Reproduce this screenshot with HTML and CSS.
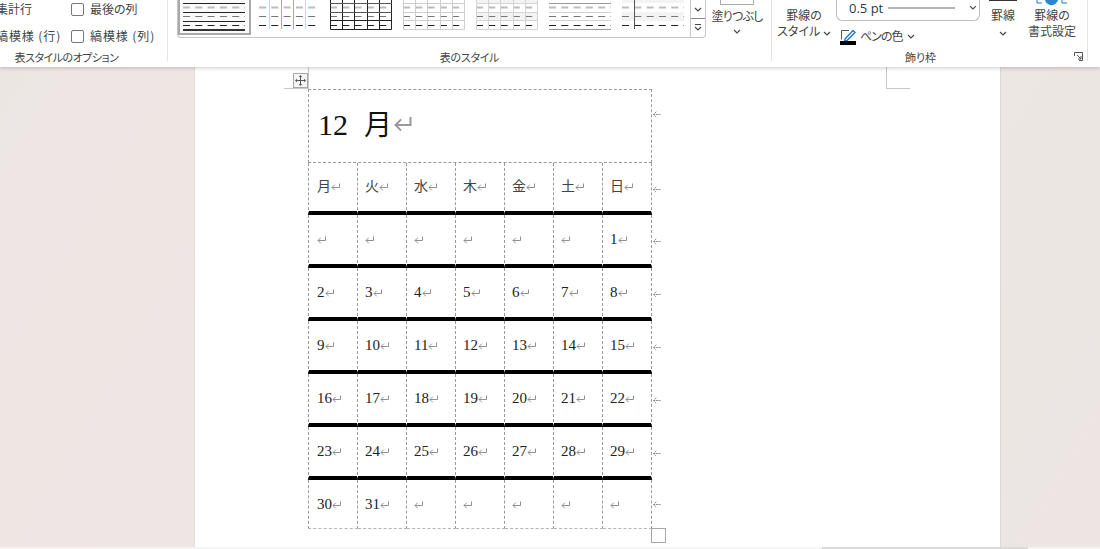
FILE: index.html
```html
<!DOCTYPE html>
<html lang="ja">
<head>
<meta charset="utf-8">
<title>表のデザイン</title>
<link rel="stylesheet" href="styles.css">
</head>
<body>
<svg class="defs" width="0" height="0" aria-hidden="true">
  <symbol id="ret" viewBox="0 0 9 8"><path d="M8.5 0.5V4.5H1M3.8 1.7L1 4.5L3.8 7.3" fill="none" stroke="currentColor" stroke-width="1"/></symbol>
  <symbol id="ret-end" viewBox="0 0 9 8"><path d="M8.5 4.5H1.5M4.3 1.7L1.5 4.5L4.3 7.3" fill="none" stroke="currentColor" stroke-width="1" stroke-dasharray="2 .6"/></symbol>
  <symbol id="chev" viewBox="0 0 8 5"><path d="M1 1L4 4L7 1" fill="none" stroke="currentColor" stroke-width="1.1"/></symbol>
  <g id="dashes">
    <path d="M0 7.5H62" stroke="#bcbcbc" stroke-width="2" stroke-dasharray="7 5.3"/>
    <path d="M0 16.5H62" stroke="#777" stroke-width="1" stroke-dasharray="7 5.3"/>
    <path d="M0 25.5H62" stroke="#222" stroke-width="1" stroke-dasharray="7 5.3"/>
  </g>
</svg>

<header class="ribbon">
  <section class="group group-options">
    <div class="options">
      <span class="opt-text">集計行</span>
      <span class="check"></span><span class="opt-text">最後の列</span>
      <span class="opt-text wide">縞模様 (行)</span>
      <span class="check"></span><span class="opt-text wide">縞模様 (列)</span>
    </div>
    <div class="group-label label-options">表スタイルのオプション</div>
  </section>

  <section class="group group-styles">
    <div class="styles-row">
      <div class="gallery">
        <div class="thumbs">
          <svg class="thumb selected" width="69" height="33" viewBox="-3 0 69 33">
            <use href="#dashes"/>
            <path d="M0 3.5H62M0 12.5H62M0 21.5H62" stroke="#222" fill="none"/>
            <path d="M0 30H62" stroke="#333" stroke-width="2"/>
          </svg>
          <svg class="thumb" width="60" height="30" viewBox="0 0 60 30">
            <use href="#dashes"/>
            <path d="M10.5 0V29M46.5 0V29" stroke="#b5dcef"/>
            <path d="M22.5 0V29M34.5 0V29" stroke="#6fb9de"/>
          </svg>
          <svg class="thumb" width="62" height="30" viewBox="0 0 62 30">
            <use href="#dashes"/>
            <path d="M0.5 0V29.5H61.5V0M12.5 0V29M24.5 0V29M37.5 0V29M49.5 0V29M0 20.5H62" stroke="#222" fill="none"/>
            <path d="M0 3.5H62M0 12.5H62" stroke="#555"/>
          </svg>
          <svg class="thumb" width="62" height="30" viewBox="0 0 62 30">
            <use href="#dashes"/>
            <path d="M0.5 0V29.5H61.5V0M12.5 0V29M24.5 0V29M37.5 0V29M49.5 0V29M0 3.5H62M0 12.5H62M0 20.5H62" stroke="#cfcfcf" fill="none"/>
          </svg>
          <svg class="thumb" width="62" height="30" viewBox="0 0 62 30">
            <path d="M0 0H62V3H0ZM0 12H62V21H0Z" fill="#f3f3f3"/>
            <use href="#dashes"/>
            <path d="M0.5 0V29.5H61.5V0M12.5 0V29M24.5 0V29M37.5 0V29M49.5 0V29M0 3.5H62M0 12.5H62M0 20.5H62" stroke="#d4d4d4" fill="none"/>
          </svg>
          <svg class="thumb" width="62" height="30" viewBox="0 0 62 30">
            <use href="#dashes"/>
            <path d="M0 3.5H62M0 29.5H62" stroke="#9a9a9a"/>
            <path d="M0 12.5H62M0 20.5H62" stroke="#d0d0d0"/>
          </svg>
          <svg class="thumb" width="62" height="30" viewBox="0 0 62 30">
            <path d="M0 0H62V3H0ZM0 12H62V21H0Z" fill="#f3f3f3"/>
            <use href="#dashes"/>
            <path d="M12.5 0V29" stroke="#555"/>
          </svg>
        </div>
        <div class="gallery-scroll">
          <span class="scroll-btn"><svg class="chev"><use href="#chev"/></svg></span>
          <span class="scroll-btn more"><svg class="chev"><use href="#chev"/></svg></span>
        </div>
      </div>
      <div class="fill">
        <span class="fill-swatch"></span>
        <span class="fill-text">塗りつぶし</span>
        <svg class="chev"><use href="#chev"/></svg>
      </div>
    </div>
    <div class="group-label label-styles">表のスタイル</div>
  </section>

  <section class="group group-borders">
    <div class="borders-row">
      <div class="stack border-style">
        <span>罫線の</span>
        <span>スタイル <svg class="chev"><use href="#chev"/></svg></span>
      </div>
      <div class="pen">
        <div class="weight">
          <span class="weight-value">0.5 pt</span>
          <span class="weight-line"></span>
          <svg class="chev"><use href="#chev"/></svg>
        </div>
        <div class="pen-color">
          <svg class="pen-icon" width="17" height="17" viewBox="0 0 17 17">
            <path d="M1.5 11.5V2.5H9" fill="none" stroke="#555"/>
            <path d="M5 11L13 2.5L15 4.5L7 12.5L4.5 13Z" fill="#fff" stroke="#1f78c8" stroke-width="1.4"/>
            <rect x="0" y="13" width="16" height="4" fill="#000"/>
          </svg>
          <span class="pen-text">ペンの色</span>
          <svg class="chev"><use href="#chev"/></svg>
        </div>
      </div>
      <div class="stack borders-btn">
        <span class="borders-icon"></span>
        <span>罫線</span>
        <svg class="chev"><use href="#chev"/></svg>
      </div>
      <div class="stack painter">
        <svg class="painter-icon" width="36" height="6" viewBox="0 0 36 6">
          <path d="M3 0V3H8M28 0V3H33" fill="none" stroke="#1f78c8"/>
          <path d="M11 0H24Q22 6 16 5Q12 4 11 0Z" fill="#2b86d0"/>
        </svg>
        <span>罫線の</span>
        <span>書式設定</span>
      </div>
    </div>
    <div class="group-label label-borders">飾り枠</div>
    <svg class="launcher" width="9" height="9" viewBox="0 0 9 9"><path d="M0.5 4V0.5H8.5V8.5H5M3 3L7 7M7 4V7H4" fill="none" stroke="#555"/></svg>
  </section>
</header>

<main class="workspace">
  <div class="page">
    <span class="crop crop-left"></span>
    <span class="crop crop-right"></span>
    <span class="move-handle">
      <svg width="11" height="11" viewBox="0 0 11 11"><path d="M5.5 0L7.2 2H3.8ZM5.5 11L3.8 9H7.2ZM0 5.5L2 3.8V7.2ZM11 5.5L9 7.2V3.8ZM5 2H6V9H5ZM2 5H9V6H2Z" fill="#555"/></svg>
    </span>
    <div class="table-wrap">
      <table class="calendar">
        <colgroup>
          <col class="col-first"><col class="col-day"><col class="col-day"><col class="col-day"><col class="col-day"><col class="col-day"><col class="col-day"><col class="col-end">
        </colgroup>
        <tr class="title-row">
          <td colspan="7" class="title first">12<span class="month">月</span><svg class="ret-big"><use href="#ret"/></svg></td>
          <td class="end"><svg class="ret"><use href="#ret-end"/></svg></td>
        </tr>
        <tr class="head-row week">
          <td class="first">月<svg class="ret"><use href="#ret"/></svg></td>
          <td>火<svg class="ret"><use href="#ret"/></svg></td>
          <td>水<svg class="ret"><use href="#ret"/></svg></td>
          <td>木<svg class="ret"><use href="#ret"/></svg></td>
          <td>金<svg class="ret"><use href="#ret"/></svg></td>
          <td>土<svg class="ret"><use href="#ret"/></svg></td>
          <td>日<svg class="ret"><use href="#ret"/></svg></td>
          <td class="end"><svg class="ret"><use href="#ret-end"/></svg></td>
        </tr>
        <tr class="week">
          <td class="first"><svg class="ret"><use href="#ret"/></svg></td>
          <td><svg class="ret"><use href="#ret"/></svg></td>
          <td><svg class="ret"><use href="#ret"/></svg></td>
          <td><svg class="ret"><use href="#ret"/></svg></td>
          <td><svg class="ret"><use href="#ret"/></svg></td>
          <td><svg class="ret"><use href="#ret"/></svg></td>
          <td>1<svg class="ret"><use href="#ret"/></svg></td>
          <td class="end"><svg class="ret"><use href="#ret-end"/></svg></td>
        </tr>
        <tr class="week">
          <td class="first">2<svg class="ret"><use href="#ret"/></svg></td>
          <td>3<svg class="ret"><use href="#ret"/></svg></td>
          <td>4<svg class="ret"><use href="#ret"/></svg></td>
          <td>5<svg class="ret"><use href="#ret"/></svg></td>
          <td>6<svg class="ret"><use href="#ret"/></svg></td>
          <td>7<svg class="ret"><use href="#ret"/></svg></td>
          <td>8<svg class="ret"><use href="#ret"/></svg></td>
          <td class="end"><svg class="ret"><use href="#ret-end"/></svg></td>
        </tr>
        <tr class="week">
          <td class="first">9<svg class="ret"><use href="#ret"/></svg></td>
          <td>10<svg class="ret"><use href="#ret"/></svg></td>
          <td>11<svg class="ret"><use href="#ret"/></svg></td>
          <td>12<svg class="ret"><use href="#ret"/></svg></td>
          <td>13<svg class="ret"><use href="#ret"/></svg></td>
          <td>14<svg class="ret"><use href="#ret"/></svg></td>
          <td>15<svg class="ret"><use href="#ret"/></svg></td>
          <td class="end"><svg class="ret"><use href="#ret-end"/></svg></td>
        </tr>
        <tr class="week">
          <td class="first">16<svg class="ret"><use href="#ret"/></svg></td>
          <td>17<svg class="ret"><use href="#ret"/></svg></td>
          <td>18<svg class="ret"><use href="#ret"/></svg></td>
          <td>19<svg class="ret"><use href="#ret"/></svg></td>
          <td>20<svg class="ret"><use href="#ret"/></svg></td>
          <td>21<svg class="ret"><use href="#ret"/></svg></td>
          <td>22<svg class="ret"><use href="#ret"/></svg></td>
          <td class="end"><svg class="ret"><use href="#ret-end"/></svg></td>
        </tr>
        <tr class="week">
          <td class="first">23<svg class="ret"><use href="#ret"/></svg></td>
          <td>24<svg class="ret"><use href="#ret"/></svg></td>
          <td>25<svg class="ret"><use href="#ret"/></svg></td>
          <td>26<svg class="ret"><use href="#ret"/></svg></td>
          <td>27<svg class="ret"><use href="#ret"/></svg></td>
          <td>28<svg class="ret"><use href="#ret"/></svg></td>
          <td>29<svg class="ret"><use href="#ret"/></svg></td>
          <td class="end"><svg class="ret"><use href="#ret-end"/></svg></td>
        </tr>
        <tr class="last-row">
          <td class="first">30<svg class="ret"><use href="#ret"/></svg></td>
          <td>31<svg class="ret"><use href="#ret"/></svg></td>
          <td><svg class="ret"><use href="#ret"/></svg></td>
          <td><svg class="ret"><use href="#ret"/></svg></td>
          <td><svg class="ret"><use href="#ret"/></svg></td>
          <td><svg class="ret"><use href="#ret"/></svg></td>
          <td><svg class="ret"><use href="#ret"/></svg></td>
          <td class="end"><svg class="ret"><use href="#ret-end"/></svg></td>
        </tr>
      </table>
      <span class="resize-handle"></span>
    </div>
  </div>
  <div class="h-scroll"><span class="h-thumb"></span></div>
</main>
</body>
</html>
```
FILE: styles.css
```css
* { box-sizing: border-box; }
html, body { height: 100%; }
body {
  margin: 0;
  overflow: hidden;
  display: flex;
  flex-direction: column;
  font-family: "Noto Sans CJK JP", "Liberation Sans", sans-serif;
  font-size: 12px;
  color: #444;
  background: #ede7e4;
}
.defs { position: absolute; }

/* ribbon */
.ribbon {
  flex: 0 0 67px;
  height: 67px;
  display: flex;
  background: #fff;
  box-shadow: 0 1px 4px rgba(0, 0, 0, .22);
  position: relative;
  z-index: 2;
  overflow: hidden;
  font-feature-settings: "palt";
}
.group {
  position: relative;
  display: flex;
  flex-direction: column;
  justify-content: space-between;
  height: 61px;
  border-right: 1px solid #e3e3e3;
}
.group-options { flex: 0 0 168px; }
.group-styles { flex: 0 0 604px; }
.group-borders { flex: 0 0 316px; }
.group-label {
  height: 16px;
  margin-bottom: -4px;
  font-size: 11px;
  line-height: 16px;
  text-align: center;
  white-space: nowrap;
}
.label-options { padding-right: 34px; letter-spacing: -.5px; }
.label-styles { letter-spacing: -.3px; }
.label-borders { padding-right: 18px; }

.options {
  display: grid;
  grid-template-columns: 75px 19px auto;
  grid-template-rows: 18px 18px;
  row-gap: 9px;
  align-items: center;
  margin-left: -4px;
}
.options > .opt-text:nth-child(1),
.options > .opt-text:nth-child(4) { grid-column: 1; }
.opt-text { white-space: nowrap; line-height: 18px; }
.opt-text.wide { letter-spacing: .9px; }
.check {
  width: 13px;
  height: 13px;
  border: 1px solid #777;
  border-radius: 2px;
}

.styles-row { display: flex; align-items: flex-start; padding-left: 9px; }
.gallery {
  flex: 0 0 529px;
  height: 38px;
  display: flex;
  justify-content: space-between;
  border: 1px solid #c6c6c6;
  border-top: 0;
  border-radius: 0 0 4px 4px;
}
.thumbs { display: flex; align-items: flex-start; gap: 11px; }
.thumb { display: block; flex: none; }
.thumb.selected {
  box-sizing: content-box;
  border: 2px solid #a9a9a9;
  border-top: 0;
  background: #fafafa;
  margin-right: -3px;
}
.gallery-scroll {
  flex: 0 0 15px;
  display: flex;
  flex-direction: column;
  border-left: 1px solid #c6c6c6;
}
.scroll-btn { flex: 1; display: flex; align-items: center; justify-content: center; color: #444; }
.scroll-btn.more { border-top: 1px solid #888; position: relative; }
.scroll-btn.more::before {
  content: "";
  position: absolute;
  left: 4px;
  right: 4px;
  top: 5px;
  border-top: 1px solid #444;
}
.chev { width: 8px; height: 5px; color: #444; display: inline-block; }
.fill {
  width: 62px;
  display: flex;
  flex-direction: column;
  align-items: center;
  line-height: 18px;
  white-space: nowrap;
}
.fill-swatch {
  width: 34px;
  height: 5px;
  border: 1px solid #aaa;
  border-top: 0;
  margin-bottom: 2px;
}
.fill-text { letter-spacing: -.8px; }
.fill .chev { margin-top: 4px; }

.borders-row { display: flex; align-items: flex-start; }
.stack {
  display: flex;
  flex-direction: column;
  align-items: center;
  line-height: 16px;
  white-space: nowrap;
}
.border-style { width: 64px; padding-top: 7px; }
.pen { width: 144px; }
.weight {
  height: 21px;
  display: flex;
  align-items: center;
  padding: 0 2px 5px 12px;
  border: 1px solid #bdbdbd;
  border-top: 0;
  border-radius: 0 0 6px 6px;
}
.weight-value {
  width: 40px;
  font-family: "Open Sans", "Liberation Sans", sans-serif;
  font-size: 13px;
  color: #1f3a57;
}
.weight-line { width: 68px; border-top: 2px solid #b4b4b4; margin-right: 14px; }
.pen-color {
  margin-top: 6px;
  display: flex;
  align-items: center;
  gap: 3px;
  padding-left: 4px;
  line-height: 16px;
}
.pen-text { letter-spacing: -1px; }
.pen-color .chev { margin-left: 2px; }
.pen-icon { margin-top: 1px; }
.borders-btn { margin-left: 8px; width: 30px; }
.borders-icon { width: 28px; height: 2px; border-top: 1px solid #333; margin-bottom: 5px; }
.borders-btn .chev { margin-top: 8px; }
.painter { width: 68px; }
.painter-icon { margin-bottom: 1px; }
.launcher { position: absolute; right: 4px; bottom: 0; }

/* document */
.workspace {
  flex: 1;
  min-height: 0;
  display: flex;
  flex-direction: column;
  background: linear-gradient(120deg, #ece6e3, #efe6e4 14%, #ece6e3 88%, #ede5e3);
}
.page {
  position: relative;
  flex: 1;
  margin-left: 194px;
  width: 807px;
  background: #fff;
  border-left: 1px solid #e2dedc;
  border-right: 1px solid #dcd8d6;
  padding: 22px 0 0 113px;
}
.h-scroll { flex: 0 0 2px; background: #f4f4f4; }
.h-thumb { display: block; height: 2px; width: 1028px; background: linear-gradient(90deg, #f4f4f4 80%, #d9d9d9 80%); }

.crop { position: absolute; border: 0 solid #c8c8c8; }
.crop-left { left: 89px; top: 0; width: 25px; height: 22px; border-bottom-width: 1px; border-right-width: 1px; }
.crop-right { left: 691px; top: 0; width: 24px; height: 22px; border-bottom-width: 1px; border-left-width: 1px; }
.move-handle {
  position: absolute;
  left: 98px;
  top: 6px;
  width: 15px;
  height: 15px;
  display: flex;
  align-items: center;
  justify-content: center;
  border: 1px solid #a8a8a8;
  background: #f4f4f4;
}

.table-wrap { position: relative; width: 356px; }
.calendar {
  table-layout: fixed;
  border-collapse: separate;
  border-spacing: 0;
  width: 356px;
  font-family: "Liberation Serif", "Noto Sans CJK JP", serif;
  font-size: 15px;
  color: #222;
}
.col-first { width: 50px; }
.col-day { width: 49px; }
.col-end { width: 12px; }
.calendar td {
  height: 53px;
  padding: 0 0 0 7px;
  vertical-align: middle;
  white-space: nowrap;
  border-right: 1px dashed #9a9a9a;
}
.calendar td.first { border-left: 1px dashed #9a9a9a; padding-left: 8px; }
.calendar td.end { border: 0; padding: 0 0 2px; color: #a0a0a0; }
.calendar .week td:not(.end) { border-bottom: 4px solid #000; }
.calendar .head-row td { height: 52px; }
.calendar .head-row td:not(.end) { padding-bottom: 4px; font-size: 14px; color: #444; }
.calendar .last-row td { height: 49px; }
.calendar .last-row td:not(.end) { border-bottom: 1px dashed #b5b5b5; }
.calendar .title-row td { height: 74px; }
.calendar .title-row td.end { padding-bottom: 25px; }
.calendar .title-row td:not(.end) {
  border-top: 1px dashed #9a9a9a;
  border-bottom: 1px dashed #9a9a9a;
}
.calendar td.title { font-size: 30px; padding: 0 0 3px 9px; color: #111; line-height: 1; }
.month { margin-left: 16px; font-size: 28px; }
.ret { width: 9px; height: 8px; color: #909090; vertical-align: 0; }
.ret-big { width: 19px; height: 16px; margin-left: 1px; color: #9a9a9a; vertical-align: 3px; }
.resize-handle {
  position: absolute;
  left: 343px;
  top: 439px;
  width: 15px;
  height: 15px;
  border: 1px solid #a8a8a8;
  background: #fff;
}
```
